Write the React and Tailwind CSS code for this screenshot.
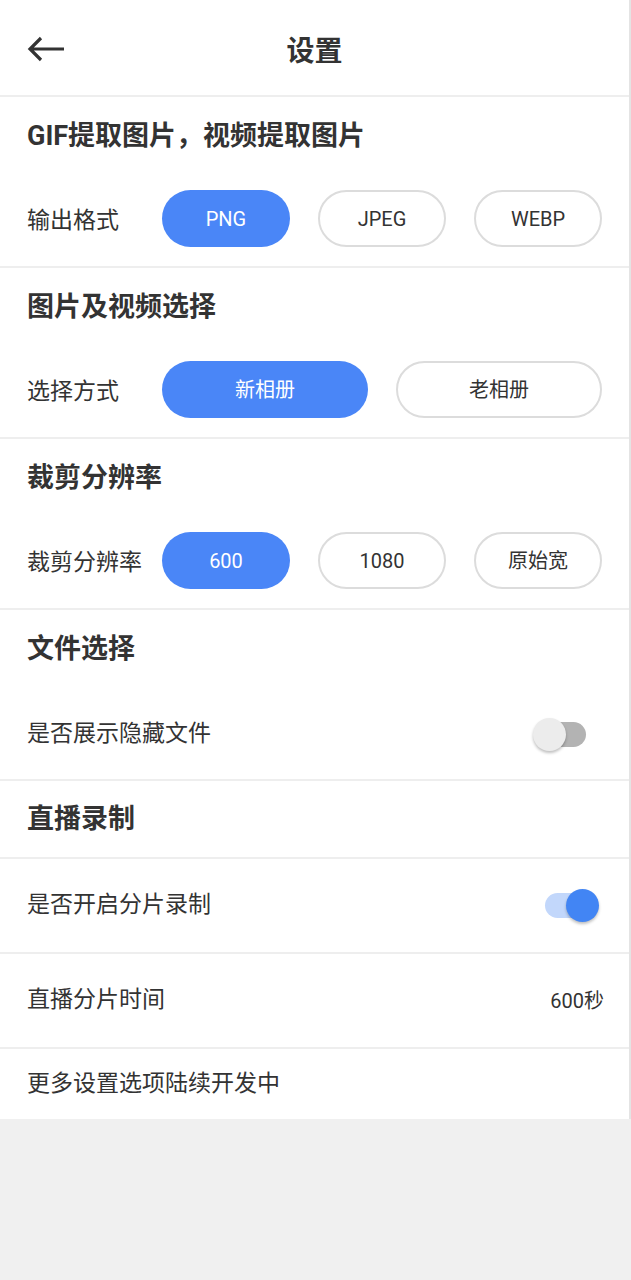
import React from "react";

const font = { fontFamily: 'Roboto, "Noto Sans CJK SC", "Noto Sans", sans-serif' };

function Pill({ label, active, wide }) {
  return (
    <div
      className={`h-[57px] ${wide ? "w-[206px]" : "w-[128px]"} shrink-0 rounded-full flex items-center justify-center text-[20px] ${
        active ? "bg-[#4a86f7] text-white" : "bg-white text-[#333] border-2 border-[#dcdcdc]"
      }`}
    >
      {label}
    </div>
  );
}

function Divider() {
  return <div className="h-[2px] bg-[#eeeeee]" />;
}

function SectionTitle({ children }) {
  return (
    <div className="h-[79px] flex items-center px-[27px] text-[27px] font-bold text-[#333]">{children}</div>
  );
}

function PillRow({ label, children }) {
  return (
    <div className="h-[90px] flex items-center pl-[27px]">
      <div className="w-[135px] shrink-0 text-[23px] text-[#333]">{label}</div>
      <div className="flex gap-[28px] mb-[5px]">{children}</div>
    </div>
  );
}

function Toggle({ on }) {
  return (
    <div className="relative w-[66px] h-[33px] shrink-0">
      <div
        className={`absolute left-[12px] top-[4px] w-[41px] h-[25px] rounded-full ${
          on ? "bg-[#c2d7fb]" : "bg-[#b3b3b3]"
        }`}
      />
      <div
        className={`absolute top-0 w-[33px] h-[33px] rounded-full shadow-[0_2px_3px_rgba(0,0,0,0.25)] ${
          on ? "left-[33px] bg-[#4285f4]" : "left-0 bg-[#ececec]"
        }`}
      />
    </div>
  );
}

export default function App() {
  return (
    <div className="w-[631px] h-[1280px] bg-[#f0f0f0] text-[#333]" style={font}>
      <div className="bg-white border-r-2 border-[#e4e4e4]">
        <div className="h-[95px] relative flex items-center justify-center">
          <svg className="absolute left-[26px] top-[35px]" width="40" height="28" viewBox="0 0 40 28">
            <path d="M38 14H4M15 3L4 14l11 11" fill="none" stroke="#333" strokeWidth="3.2" strokeLinecap="butt" strokeLinejoin="miter" />
          </svg>
          <div className="text-[28px] font-bold text-[#333] pt-[9px]">设置</div>
        </div>
        <Divider />
        <SectionTitle>GIF提取图片，视频提取图片</SectionTitle>
        <PillRow label="输出格式">
          <Pill label="PNG" active />
          <Pill label="JPEG" />
          <Pill label="WEBP" />
        </PillRow>
        <Divider />
        <SectionTitle>图片及视频选择</SectionTitle>
        <PillRow label="选择方式">
          <Pill label="新相册" active wide />
          <Pill label="老相册" wide />
        </PillRow>
        <Divider />
        <SectionTitle>裁剪分辨率</SectionTitle>
        <PillRow label="裁剪分辨率">
          <Pill label="600" active />
          <Pill label="1080" />
          <Pill label="原始宽" />
        </PillRow>
        <Divider />
        <SectionTitle>文件选择</SectionTitle>
        <div className="h-[90px] flex items-center justify-between pl-[27px] pr-[30px]">
          <div className="text-[23px]">是否展示隐藏文件</div>
          <Toggle />
        </div>
        <Divider />
        <div className="h-[76px] flex items-center px-[27px] text-[27px] font-bold">直播录制</div>
        <Divider />
        <div className="h-[93px] flex items-center justify-between pl-[27px] pr-[30px]">
          <div className="text-[23px]">是否开启分片录制</div>
          <Toggle on />
        </div>
        <Divider />
        <div className="h-[93px] flex items-center justify-between pl-[27px] pr-[25px]">
          <div className="text-[23px]">直播分片时间</div>
          <div className="text-[20px]">600秒</div>
        </div>
        <Divider />
        <div className="h-[70px] flex items-center px-[27px] text-[23px]">更多设置选项陆续开发中</div>
      </div>
    </div>
  );
}
